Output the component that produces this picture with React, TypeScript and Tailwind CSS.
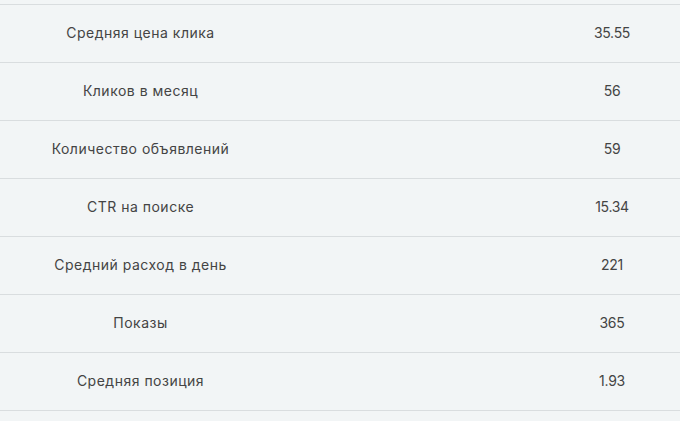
import React from "react";

const rows: [string, string][] = [
  ["Средняя цена клика", "35.55"],
  ["Кликов в месяц", "56"],
  ["Количество объявлений", "59"],
  ["CTR на поиске", "15.34"],
  ["Средний расход в день", "221"],
  ["Показы", "365"],
  ["Средняя позиция", "1.93"],
];

export default function App() {
  return (
    <div
      className="w-[680px] h-[421px] overflow-hidden bg-[#f2f5f6] text-[#444444] text-[14px]"
      style={{ fontFamily: 'Inter, "Open Sans", "Liberation Sans", sans-serif' }}
    >
      <div className="h-[4px]" />
      {rows.map(([label, value]) => (
        <div
          key={label}
          className="grid grid-cols-[281px_1fr_136px] h-[58px] border-t border-[#d9dddf] items-center pb-[2px]"
        >
          <div className="text-center tracking-[0.5px]">{label}</div>
          <div />
          <div className="text-center tracking-[-0.3px]">{value}</div>
        </div>
      ))}
      <div className="border-t border-[#d9dddf]" />
    </div>
  );
}
